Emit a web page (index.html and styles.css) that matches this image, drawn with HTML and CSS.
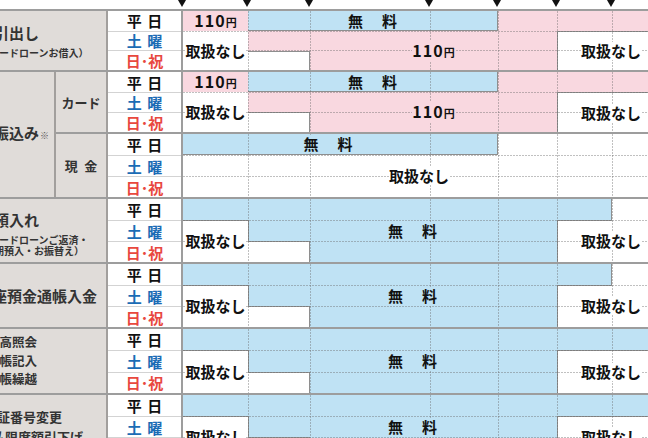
FILE: index.html
```html
<!DOCTYPE html>
<html lang="ja">
<head>
<meta charset="utf-8">
<title>ATMご利用手数料</title>
<link rel="stylesheet" href="styles.css">
</head>
<body>
<div class="sheet">
  <div class="marks">
    <div></div>
    <div><i class="tri"></i></div>
    <div><i class="tri"></i></div>
    <div><i class="tri"></i></div>
    <div><i class="tri"></i></div>
    <div><i class="tri"></i></div>
    <div><i class="tri"></i></div>
    <div><i class="tri"></i></div>
  </div>

  <div class="table">
    <!-- お引出し -->
    <div class="group first">
      <div class="label">
        <p class="lg">お引出し</p>
        <p class="sm gap">（カードローンお借入）</p>
      </div>
      <div class="days">
        <div class="day">平 日</div>
        <div class="day sat">土 曜</div>
        <div class="day hol">日･祝</div>
      </div>
      <div class="tl">
        <div class="pink c28 r13"></div>
        <div class="cell pink c12 r1"><span class="t yen on-pink">110<small>円</small></span></div>
        <div class="cell blue c25 r1 b-r b-b"><span class="t free on-blue">無　料</span></div>
        <div class="cell white c68 r23 b-t b-l"><span class="t on-white">取扱なし</span></div>
        <div class="white c23 r3 b-t b-r"></div>
        <div class="cell c12 r23"><span class="t on-white">取扱なし</span></div>
        <div class="cell c36 r23"><span class="t yen on-pink">110<small>円</small></span></div>
      </div>
    </div>

    <!-- お振込み -->
    <div class="group transfer">
      <div class="label main">
        <p class="lg">お振込み<small class="note">※</small></p>
      </div>
      <div class="subs">
        <div class="sub card">
          <div class="sublabel">カード</div>
          <div class="days">
            <div class="day">平 日</div>
            <div class="day sat">土 曜</div>
            <div class="day hol">日･祝</div>
          </div>
          <div class="tl">
            <div class="pink c28 r13"></div>
            <div class="cell pink c12 r1"><span class="t yen on-pink">110<small>円</small></span></div>
            <div class="cell blue c25 r1 b-r b-b"><span class="t free on-blue">無　料</span></div>
            <div class="cell white c68 r23 b-t b-l"><span class="t on-white">取扱なし</span></div>
            <div class="white c23 r3 b-t b-r"></div>
            <div class="cell c12 r23"><span class="t on-white">取扱なし</span></div>
            <div class="cell c36 r23"><span class="t yen on-pink">110<small>円</small></span></div>
          </div>
        </div>
        <div class="sub cash">
          <div class="sublabel">現&ensp;金</div>
          <div class="days">
            <div class="day">平 日</div>
            <div class="day sat">土 曜</div>
            <div class="day hol">日･祝</div>
          </div>
          <div class="tl">
            <div class="cell blue c15 r1 b-r b-b"><span class="t free on-blue nudge-l">無　料</span></div>
            <div class="cell c18 r23"><span class="t on-white nudge-na">取扱なし</span></div>
          </div>
        </div>
      </div>
    </div>

    <!-- お預入れ -->
    <div class="group">
      <div class="label deposit">
        <p class="lg">お預入れ</p>
        <p class="sm tight">（カードローンご返済・<br><span class="ind">定期預入・お振替え）</span></p>
      </div>
      <div class="days">
        <div class="day">平 日</div>
        <div class="day sat">土 曜</div>
        <div class="day hol">日･祝</div>
      </div>
      <div class="tl">
        <div class="cell white c68 r23 b-l"><span class="t on-white">取扱なし</span></div>
        <div class="blue c17 r1 b-r sh"></div>
        <div class="blue c26 r23 b-l"></div>
        <div class="white c23 r3 b-t b-r"></div>
        <div class="cell c12 r23"><span class="t on-white">取扱なし</span></div>
        <div class="cell c26 r2"><span class="t free on-blue nudge-r">無　料</span></div>
      </div>
    </div>

    <!-- 通帳入金 -->
    <div class="group">
      <div class="label">
        <p class="lg shift">口座預金通帳入金</p>
      </div>
      <div class="days">
        <div class="day">平 日</div>
        <div class="day sat">土 曜</div>
        <div class="day hol">日･祝</div>
      </div>
      <div class="tl">
        <div class="cell white c68 r23 b-l"><span class="t on-white">取扱なし</span></div>
        <div class="blue c17 r1 b-r sh"></div>
        <div class="blue c26 r23 b-l"></div>
        <div class="white c23 r3 b-t b-r"></div>
        <div class="cell c12 r23"><span class="t on-white">取扱なし</span></div>
        <div class="cell c26 r2"><span class="t free on-blue nudge-r">無　料</span></div>
      </div>
    </div>

    <!-- 残高照会 -->
    <div class="group tall">
      <div class="label list">
        <p class="md">残高照会</p>
        <p class="md">通帳記入</p>
        <p class="md">通帳繰越</p>
      </div>
      <div class="days">
        <div class="day">平 日</div>
        <div class="day sat">土 曜</div>
        <div class="day hol">日･祝</div>
      </div>
      <div class="tl">
        <div class="cell white c68 r23 b-l"><span class="t on-white">取扱なし</span></div>
        <div class="blue c18 r1 sh"></div>
        <div class="blue c26 r23 b-l"></div>
        <div class="white c23 r3 b-t b-r"></div>
        <div class="cell c12 r23"><span class="t on-white">取扱なし</span></div>
        <div class="cell c26 r2"><span class="t free on-blue nudge-r">無　料</span></div>
      </div>
    </div>

    <!-- 暗証番号変更 -->
    <div class="group">
      <div class="label list2">
        <p class="md2">暗証番号変更</p>
        <p class="md2 out">支払限度額引下げ</p>
      </div>
      <div class="days">
        <div class="day">平 日</div>
        <div class="day sat">土 曜</div>
        <div class="day hol">日･祝</div>
      </div>
      <div class="tl">
        <div class="cell white c68 r23 b-l"><span class="t on-white">取扱なし</span></div>
        <div class="blue c18 r1 sh"></div>
        <div class="blue c26 r23 b-l"></div>
        <div class="white c23 r3 b-t b-r"></div>
        <div class="cell c12 r23"><span class="t on-white">取扱なし</span></div>
        <div class="cell c26 r2"><span class="t free on-blue nudge-r">無　料</span></div>
      </div>
    </div>
  </div>
</div>
</body>
</html>
```

FILE: styles.css
```css
* { box-sizing: border-box; margin: 0; padding: 0; }
html, body { overflow: hidden; }
body {
  width: 648px;
  height: 438px;
  background: #fff;
  color: #111;
  font-family: "Noto Sans CJK JP", "Noto Sans", sans-serif;
}
.sheet { width: 694px; margin-left: -30px; }

/* time markers */
.marks {
  display: grid;
  grid-template-columns: 213px 65px 62px 120px 68px 59px 55px 52px;
  height: 9px;
}
.tri {
  display: block;
  width: 0; height: 0;
  margin-left: -5px;
  border-left: 4px solid transparent;
  border-right: 4px solid transparent;
  border-top: 7px solid #111;
}

.table { border-top: 2px solid #9d9d9d; }
.group { display: flex; height: 65px; border-bottom: 2px solid #9d9d9d; }
.group.first { height: 61px; }
.group.transfer { height: 127px; }
.group.tall { height: 66px; }

/* label column */
.label {
  width: 138px;
  flex: none;
  background: #e0dcd9;
  border-right: 2px solid #a29f9d;
  padding-left: 9px;
  display: flex;
  flex-direction: column;
  justify-content: center;
  color: #333;
}
.label.main { width: 86px; }
.label.deposit { padding-top: 4px; }
.label.list { padding-left: 17px; }
.label.list2 { padding-left: 14px; }
.lg { font-size: 15px; line-height: 20px; font-weight: 700; white-space: nowrap; }
.lg.shift { margin-left: -2px; }
.sm { font-size: 10px; line-height: 12px; font-weight: 700; white-space: nowrap; }
.sm.gap { margin-top: 3px; line-height: 13px; }
.sm.tight { margin-top: 4px; line-height: 11px; }
.ind { padding-left: 5px; }
.md { font-size: 12.5px; line-height: 18.5px; font-weight: 700; white-space: nowrap; }
.md2 { font-size: 13px; line-height: 19.5px; font-weight: 700; white-space: nowrap; }
.md2.out { margin-left: -5px; }
.note { font-size: 9px; font-weight: 400; color: #555; margin-left: 1px; }

.subs { display: flex; flex-direction: column; flex: none; width: 608px; }
.sub { display: flex; }
.sub.card { height: 62px; border-bottom: 2px solid #9d9d9d; }
.sub.cash { flex: 1; }
.sublabel {
  width: 52px;
  flex: none;
  background: #e0dcd9;
  border-right: 2px solid #a29f9d;
  display: flex;
  align-items: center;
  justify-content: center;
  font-size: 13px;
  font-weight: 700;
  color: #333;
  white-space: nowrap;
}

/* day column */
.days {
  width: 75px;
  flex: none;
  border-right: 2px solid #9d9d9d;
  display: grid;
  grid-template-rows: repeat(3, 1fr);
}
.day {
  display: flex;
  align-items: center;
  justify-content: center;
  font-size: 15px;
  font-weight: 700;
  line-height: 1;
  word-spacing: 2px;
  white-space: nowrap;
}
.day + .day { border-top: 1px solid #d3d3d3; }
.sat { color: #1b6cb5; }
.hol { color: #e8483e; }

/* timeline */
.tl {
  --dash: rgba(105, 105, 105, 0.42);
  position: relative;
  flex: none;
  width: 481px;
  display: grid;
  grid-template-columns: 65px 62px 120px 68px 59px 55px 52px;
  grid-template-rows: repeat(3, 1fr);
}
.tl::after {
  content: "";
  position: absolute;
  inset: 0;
  pointer-events: none;
  background:
    linear-gradient(to right, var(--dash) 2px, transparent 2px) 0 calc(33.333% + 0.333px) / 3px 1px repeat-x,
    linear-gradient(to right, var(--dash) 2px, transparent 2px) 0 calc(66.667% + 0.667px) / 3px 1px repeat-x,
    linear-gradient(var(--dash) 2px, transparent 2px) 65px 0 / 1px 3px repeat-y,
    linear-gradient(var(--dash) 2px, transparent 2px) 127px 0 / 1px 3px repeat-y,
    linear-gradient(var(--dash) 2px, transparent 2px) 247px 0 / 1px 3px repeat-y,
    linear-gradient(var(--dash) 2px, transparent 2px) 315px 0 / 1px 3px repeat-y,
    linear-gradient(var(--dash) 2px, transparent 2px) 374px 0 / 1px 3px repeat-y,
    linear-gradient(var(--dash) 2px, transparent 2px) 429px 0 / 1px 3px repeat-y;
}
.cell { display: flex; align-items: center; justify-content: center; }
.pink { background: #f9d8e0; }
.blue { background: #bfe2f4; }
.white { background: #fff; }
.b-t { border-top: 1px solid #8e8e8e; }
.b-r { border-right: 1px solid #8e8e8e; }
.b-b { border-bottom: 1px solid #8e8e8e; }
.b-l { border-left: 1px solid #8e8e8e; }
.sh { box-shadow: 0 1px 0 #8e8e8e; }

.c12 { grid-column: 1 / 2; }
.c15 { grid-column: 1 / 5; }
.c17 { grid-column: 1 / 7; }
.c18 { grid-column: 1 / 8; }
.c23 { grid-column: 2 / 3; }
.c25 { grid-column: 2 / 5; }
.c26 { grid-column: 2 / 6; }
.c28 { grid-column: 2 / 8; }
.c36 { grid-column: 3 / 6; }
.c68 { grid-column: 6 / 8; }
.r1 { grid-row: 1 / 2; }
.r2 { grid-row: 2 / 3; }
.r3 { grid-row: 3 / 4; }
.r23 { grid-row: 2 / 4; }
.r13 { grid-row: 1 / 4; }

.t {
  position: relative;
  z-index: 1;
  font-size: 15px;
  font-weight: 700;
  line-height: 18px;
  white-space: nowrap;
  color: #111;
}
.on-pink { background: #f9d8e0; }
.on-blue { background: #bfe2f4; }
.on-white { background: #fff; }
.free { letter-spacing: 2px; padding-left: 2px; }
.yen { letter-spacing: 1px; font-size: 16px; }
.yen small { font-size: 11px; letter-spacing: 0; }
.nudge-l { margin-right: 24px; }
.nudge-r { margin-left: 20px; }
.nudge-na { margin-right: 9px; }
```
